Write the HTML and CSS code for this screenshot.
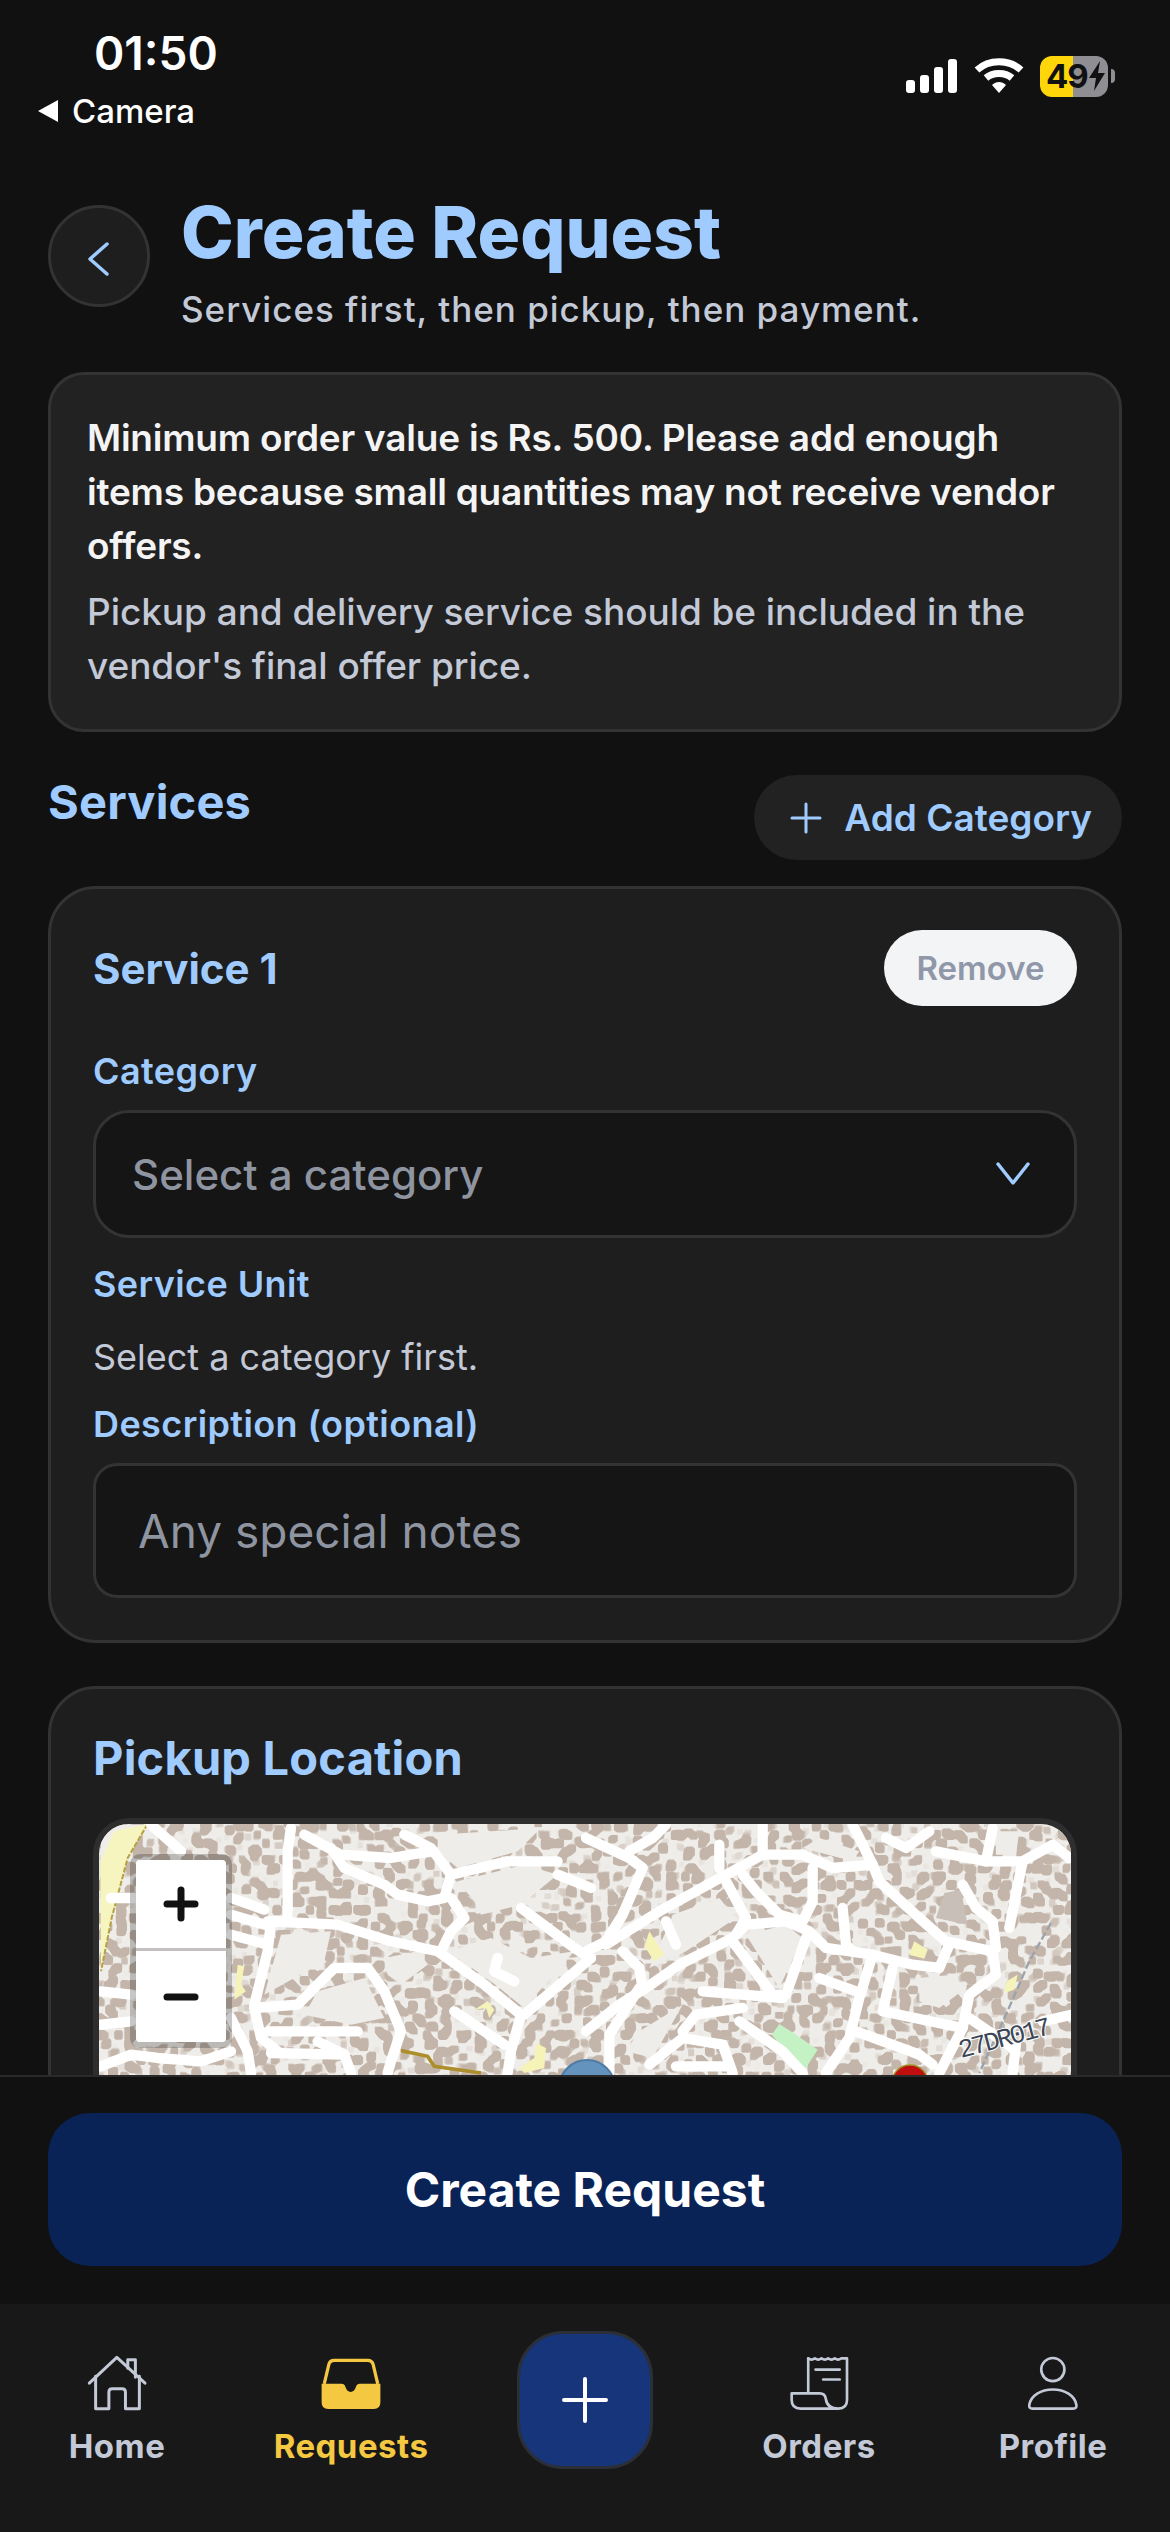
FILE: index.html
```html
<!DOCTYPE html>
<html lang="en">
<head>
  <meta charset="UTF-8">
  <meta name="viewport" content="width=device-width, initial-scale=1.0">
  <title>Create Request</title>
  <link rel="stylesheet" href="styles.css">
</head>
<body>
  <div class="screen">
    <div class="scroll-area">
      <div class="status-bar">
        <div>
          <div class="status-time">01:50</div>
          <div class="status-back"><span class="back-arrow"></span>Camera</div>
        </div>
        <div class="status-icons">
          <svg width="52" height="34" viewBox="0 0 52 34" fill="#fff">
            <rect x="0" y="21" width="9" height="13" rx="3"/>
            <rect x="14" y="16" width="9" height="18" rx="3"/>
            <rect x="28" y="8" width="9" height="26" rx="3"/>
            <rect x="42" y="0" width="9" height="34" rx="3"/>
          </svg>
          <svg width="50" height="36" viewBox="0 0 50 36" fill="none" stroke="#fff" stroke-width="7">
            <path d="M3 12 C15 1 35 1 47 12"/>
            <path d="M12 20 C19 14 31 14 38 20"/>
            <path d="M18 27 L25 35 L32 27 C28 23 22 23 18 27 Z" fill="#fff" stroke="none"/>
          </svg>
          <div class="battery">
            <span class="battery-level">49</span>
            <svg width="18" height="30" viewBox="0 0 18 30" fill="#111"><path d="M12 0 L1 17 H8 L6 30 L17 12 H10 Z"/></svg>
          </div>
          <span class="battery-cap"></span>
        </div>
      </div>

      <div class="content">
        <div class="page-header">
          <button class="back-btn">
            <svg width="24" height="36" viewBox="0 0 24 36" fill="none" stroke="#9fcbff" stroke-width="3.5" stroke-linecap="round" stroke-linejoin="round"><path d="M20 3 L3 18 L20 33"/></svg>
          </button>
          <div>
            <h1 class="page-title">Create Request</h1>
            <p class="page-sub">Services first, then pickup, then payment.</p>
          </div>
        </div>

        <div class="notice">
          <p class="notice-main">Minimum order value is Rs. 500. Please add enough items because small quantities may not receive vendor offers.</p>
          <p class="notice-sub">Pickup and delivery service should be included in the vendor's final offer price.</p>
        </div>

        <div class="section-row">
          <h2 class="section-title">Services</h2>
          <button class="add-btn">
            <svg width="32" height="32" viewBox="0 0 32 32" stroke="#9fcbff" stroke-width="3" stroke-linecap="round"><path d="M16 2 V30 M2 16 H30"/></svg>
            Add Category
          </button>
        </div>

        <div class="card service-card">
          <div class="service-head">
            <h3 class="service-title">Service 1</h3>
            <button class="remove-btn">Remove</button>
          </div>
          <div class="field-label label-category">Category</div>
          <div class="select-box">
            <span>Select a category</span>
            <svg width="34" height="26" viewBox="0 0 34 26" fill="none" stroke="#9fcbff" stroke-width="3.5" stroke-linecap="round" stroke-linejoin="round"><path d="M2 3 L17 22 L32 3"/></svg>
          </div>
          <div class="field-label label-unit">Service Unit</div>
          <div class="hint">Select a category first.</div>
          <div class="field-label label-desc">Description (optional)</div>
          <div class="text-box">Any special notes</div>
        </div>

        <div class="card pickup-card">
          <h2 class="section-title">Pickup Location</h2>
          <div class="map">
            <svg class="map-canvas" width="974" height="400" viewBox="98 1826 974 400">
              <defs>
                <filter id="buildings" x="0" y="0" width="100%" height="100%" color-interpolation-filters="sRGB">
                  <feTurbulence type="fractalNoise" baseFrequency="0.12" numOctaves="1" seed="11"/>
                  <feColorMatrix values="0 0 0 0 0.765  0 0 0 0 0.71  0 0 0 0 0.665  16 0 0 0 -8.9"/>
                  <feMorphology operator="dilate" radius="1.5"/>
                  <feGaussianBlur stdDeviation="0.5"/>
                </filter>
                <filter id="soft"><feGaussianBlur stdDeviation="0.6"/></filter>
              </defs>
              <rect x="98" y="1826" width="974" height="400" fill="#efede9"/>
              <rect x="98" y="1826" width="974" height="400" filter="url(#buildings)"/>

              <g transform="translate(90 1820) scale(.3333)">
                <g fill="#efede9" filter="url(#soft)">
                  <path d="M1040 50 L1350 30 L1280 100 L1100 150 L1040 100 Z"/>
                  <path d="M1100 190 L1300 140 L1400 170 L1290 260 L1170 290 L1150 250 Z"/>
                  <path d="M1070 400 L1200 360 L1320 420 L1450 400 L1300 570 L1200 490 Z"/>
                  <path d="M570 350 L720 340 L700 430 L520 530 Z"/>
                  <path d="M680 520 L820 480 L880 600 L780 620 L640 590 Z"/>
                  <path d="M880 420 L980 400 L1010 440 L930 500 L890 470 Z"/>
                  <path d="M30 20 H170 L30 200 Z"/>
                </g>
                <path d="M28 130 L70 40 L170 18 L110 120 L62 300 L30 460 Z" fill="#f7f5bf"/>
                <path d="M170 18 L110 120 L62 300 L30 460" fill="none" stroke="#b8a040" stroke-width="6" stroke-dasharray="16 5"/>
                <g fill="#f5f3b8">
                  <path d="M440 440 L460 445 L450 500 L465 520 L430 545 Z"/>
                  <path d="M1150 575 L1190 550 L1210 575 L1195 600 L1185 570 Z"/>
                  <path d="M1335 675 L1365 690 L1360 750 L1300 765 L1285 750 L1330 720 Z"/>
                </g>
                <g fill="none" stroke="#fff" stroke-width="31" stroke-linecap="round" stroke-linejoin="round" filter="url(#soft)">
                  <path d="M180 20 L270 100"/>
                  <path d="M60 240 H130"/>
                  <path d="M420 240 L520 275"/>
                  <path d="M420 290 L520 320"/>
                  <path d="M420 350 L530 380"/>
                  <path d="M600 30 L590 100 L590 310 L540 310 L530 400 L490 560"/>
                  <path d="M530 310 L740 320 L900 370 L1040 400 L1180 500 L1290 590 L1260 700 L1250 765"/>
                  <path d="M490 570 L620 560 L730 450 L830 450 L880 520 L930 640 L900 730 L890 765"/>
                  <path d="M490 570 L510 660 L560 700"/>
                  <path d="M720 90 L760 150 L880 200 L920 230 L1010 250 L1060 240 L1080 170 L1020 90 L940 50"/>
                  <path d="M640 50 L750 110 L900 120 L1020 100"/>
                  <path d="M1080 170 L1250 130 L1400 130"/>
                  <path d="M1080 240 L1120 300 L1080 340 L1050 400"/>
                  <path d="M1290 270 L1450 390 L1500 420"/>
                  <path d="M1400 170 L1500 210"/>
                  <path d="M1090 580 L1240 680"/>
                  <path d="M1220 420 L1210 460 L1270 490"/>
                  <path d="M1300 590 L1500 420"/>
                  <path d="M30 520 L120 530"/>
                  <path d="M30 620 L120 610"/>
                  <path d="M30 745 L120 710 L200 720 L330 730 L420 700"/>
                  <path d="M420 600 L470 700 L480 765"/>
                  <path d="M530 640 L800 640"/>
                  <path d="M680 670 L760 710 L780 765"/>
                  <path d="M540 705 L760 710"/>
                </g>
                <path d="M930 698 L1010 715 L1030 745 L1170 765" fill="none" stroke="#ad8e2d" stroke-width="11"/>
              </g>

              <g transform="translate(585 1820) scale(.3333)">
                <g fill="#efede9" filter="url(#soft)">
                  <path d="M260 290 L400 240 L450 300 L300 400 L190 450 L240 340 Z"/>
                  <path d="M480 350 L600 320 L650 360 L580 510 Z"/>
                  <path d="M1230 40 H1300 L1290 110 L1230 110 Z"/>
                  <path d="M1000 480 L1100 470 L1140 510 L1060 570 L1000 550 Z"/>
                  <path d="M160 640 L290 560 L200 720 L120 700 Z"/>
                  <path d="M700 60 L820 100 L800 130 L650 90 Z"/>
                </g>
                <path d="M558 650 L580 618 L630 650 L695 695 L650 765 Z" fill="#c5f2c5"/>
                <g fill="#f5f3b8">
                  <path d="M190 340 L235 410 L205 430 L175 385 Z"/>
                  <path d="M985 370 L1025 395 L1015 422 L970 410 Z"/>
                  <path d="M1295 470 L1285 515 L1255 525 L1262 490 Z"/>
                </g>
                <path d="M1075 225 L1125 215 L1145 320 L1050 300 Z" fill="#c8bfb8"/>
                <g fill="none" stroke="#fff" stroke-width="31" stroke-linecap="round" stroke-linejoin="round" filter="url(#soft)">
                  <path d="M60 380 L220 280 L420 170 L530 110 L650 110 L740 150 L860 140 L880 190 L1000 300 L1080 370 L1220 400 L1230 470 L1150 530 L1130 630 L1060 765"/>
                  <path d="M0 60 L130 120 L170 150 L110 290 L60 370 L0 400"/>
                  <path d="M130 100 L200 60 L240 20"/>
                  <path d="M530 20 V110"/>
                  <path d="M800 20 L860 140"/>
                  <path d="M400 80 V150"/>
                  <path d="M900 60 L960 90 L1030 40"/>
                  <path d="M1050 100 L1200 130 L1310 130 L1400 80 L1450 120"/>
                  <path d="M1310 130 L1270 330"/>
                  <path d="M1220 30 L1200 130"/>
                  <path d="M1130 200 L1170 270 L1220 310 L1230 390"/>
                  <path d="M0 640 L100 560 L180 510 L280 440 L440 360 L480 320 L600 310 L670 340 L720 390 L860 410 L820 540 L790 660 L720 765"/>
                  <path d="M440 370 L560 530 L600 530 L660 360"/>
                  <path d="M350 520 L590 540"/>
                  <path d="M70 765 L70 650 L160 510"/>
                  <path d="M860 410 L980 440 L1060 450 L1090 380"/>
                  <path d="M920 450 L890 580 L1130 630"/>
                  <path d="M420 190 L480 300 L450 350"/>
                  <path d="M470 170 L510 220 L580 290 L650 310 L680 250 L680 150"/>
                  <path d="M240 310 L270 380"/>
                  <path d="M770 270 L780 380 L800 400"/>
                  <path d="M700 480 L810 520"/>
                  <path d="M290 640 L330 590 L470 570"/>
                  <path d="M190 740 L290 660 L410 680 L440 765"/>
                  <path d="M460 610 L590 700 L650 765"/>
                  <path d="M810 640 L1000 710 L1040 740"/>
                  <path d="M270 745 H420"/>
                  <path d="M1290 680 L1280 765"/>
                  <path d="M1150 600 L1280 690"/>
                  <path d="M110 400 L160 450 L170 510"/>
                  <path d="M1370 610 L1460 590"/>
                </g>
                <path d="M1395 315 L1330 430 L1260 590 L1180 765" fill="none" stroke="#9aa3ad" stroke-width="7" stroke-dasharray="24 9"/>
              </g>

              <text class="road-label" x="960" y="2060" transform="rotate(-15 960 2060)">27DR017</text>
              <circle cx="586" cy="2090" r="28" fill="#6493bd" stroke="#4e7ca6" stroke-width="2"/>
              <circle cx="909" cy="2085" r="18" fill="#c00d0d" stroke="#a08a20" stroke-width="1.5"/>
            </svg>
            <div class="zoom-control">
              <button class="zoom-btn">
                <svg width="36" height="36" viewBox="0 0 36 36" stroke="#111" stroke-width="7" stroke-linecap="round"><path d="M18 4 V32 M4 18 H32"/></svg>
              </button>
              <button class="zoom-btn">
                <svg width="36" height="36" viewBox="0 0 36 36" stroke="#111" stroke-width="7" stroke-linecap="round"><path d="M4 18 H32"/></svg>
              </button>
            </div>
          </div>
        </div>
      </div>
    </div>

    <div class="footer-bar">
      <button class="submit-btn">Create Request</button>
    </div>

    <nav class="bottom-nav">
      <div class="nav-item">
        <svg class="nav-icon" viewBox="80 75 185 175" fill="none" stroke="#c3c9d6" stroke-width="9" stroke-linecap="round" stroke-linejoin="round">
          <path d="M89 163 L172 85 L257 163"/>
          <path d="M205 118 V92 H228 V145"/>
          <path d="M108 142 V240 H148 V190 Q148 180 158 180 H188 Q198 180 198 190 V240 H240 V142"/>
        </svg>
        <span>Home</span>
      </div>
      <div class="nav-item active">
        <svg class="nav-icon" viewBox="780 75 190 175" fill="#f5c842">
          <path d="M793 165 L807 106 Q810 93 824 93 H926 Q940 93 943 106 L957 165" fill="none" stroke="#f5c842" stroke-width="10"/>
          <path d="M785 165 H846 Q855 165 858 175 Q863 190 874 190 Q885 190 890 175 Q893 165 902 165 H965 V222 Q965 242 945 242 H805 Q785 242 785 222 Z"/>
        </svg>
        <span>Requests</span>
      </div>
      <div class="nav-item">
        <button class="fab">
          <svg width="46" height="46" viewBox="0 0 46 46" stroke="#fff" stroke-width="4" stroke-linecap="round"><path d="M23 2 V44 M2 23 H44"/></svg>
        </button>
      </div>
      <div class="nav-item">
        <svg class="nav-icon" viewBox="445 75 185 175" fill="none" stroke="#c3c9d6" stroke-width="8" stroke-linecap="round" stroke-linejoin="round">
          <path d="M505 88 q10 8 20 0 q10 8 20 0 q10 8 20 0 q10 8 20 0 q10 8 20 0 l15 0"/>
          <path d="M505 88 V192"/>
          <path d="M622 88 V214 Q622 240 596 240 H482 Q455 240 455 214 V194 H540 Q555 194 558 210 Q562 240 596 240"/>
          <path d="M527 122 H600 M550 152 H600"/>
        </svg>
        <span>Orders</span>
      </div>
      <div class="nav-item">
        <svg class="nav-icon" viewBox="1149 75 185 175" fill="none" stroke="#c3c9d6" stroke-width="8" stroke-linejoin="round">
          <circle cx="1241" cy="122" r="35"/>
          <path d="M1170 228 C1175 200 1205 182 1241 182 C1277 182 1307 200 1312 228 Q1314 240 1302 240 H1180 Q1168 240 1170 228 Z"/>
        </svg>
        <span>Profile</span>
      </div>
    </nav>
  </div>
</body>
</html>
```

FILE: styles.css
```css
* {
  box-sizing: border-box;
}

body {
  margin: 0;
  background-color: #111;
  font-family: Inter, "Liberation Sans", sans-serif;
}

button {
  font-family: inherit;
  border: none;
  padding: 0;
}

h1, h2, h3, p {
  margin: 0;
}

.screen {
  width: 1170px;
  height: 2532px;
  display: flex;
  flex-direction: column;
  overflow: hidden;
}

.scroll-area {
  flex: 1;
  min-height: 0;
  overflow: hidden;
}

/* status bar */
.status-bar {
  height: 190px;
  padding: 22px 55px 0 38px;
  display: flex;
  justify-content: space-between;
  color: #fff;
}

.status-time {
  font-size: 46px;
  font-weight: 600;
  line-height: 62px;
  padding-left: 56px;
}

.status-back {
  display: flex;
  align-items: center;
  gap: 14px;
  font-size: 33px;
  font-weight: 500;
  line-height: 54px;
}

.back-arrow {
  width: 0;
  height: 0;
  border-top: 11px solid transparent;
  border-bottom: 11px solid transparent;
  border-right: 20px solid #fff;
}

.status-icons {
  display: flex;
  align-items: center;
  gap: 16px;
  height: 40px;
  margin-top: 34px;
}

.battery {
  width: 68px;
  height: 41px;
  border-radius: 12px;
  background: linear-gradient(90deg, #ffd60a 48%, #8e8e93 48%);
  display: flex;
  align-items: center;
  padding-left: 6px;
}

.battery-level {
  color: #111;
  font-size: 33px;
  font-weight: 700;
  letter-spacing: -1px;
}

.battery-cap {
  width: 4px;
  height: 14px;
  background-color: #8e8e93;
  border-radius: 0 4px 4px 0;
  margin-left: -13px;
}

/* page content */
.content {
  padding: 0 48px;
}

.page-header {
  display: flex;
  align-items: flex-start;
  gap: 31px;
}

.back-btn {
  width: 102px;
  height: 102px;
  margin-top: 15px;
  padding-top: 6px;
  flex-shrink: 0;
  border-radius: 50%;
  background-color: #1e1e1e;
  border: 3px solid #333;
  display: flex;
  align-items: center;
  justify-content: center;
}

.page-title {
  font-size: 71px;
  font-weight: 800;
  line-height: 84px;
  color: #9fcbff;
}

.page-sub {
  margin-top: 10px;
  font-size: 35px;
  font-weight: 500;
  line-height: 50px;
  letter-spacing: 1px;
  color: #c3c9d6;
}

.notice {
  margin-top: 38px;
  padding: 36px 36px;
  border: 3px solid #333;
  border-radius: 36px;
  background-color: #222;
}

.notice-main {
  font-size: 37px;
  font-weight: 600;
  line-height: 54px;
  letter-spacing: -0.22px;
  color: #f4f4f5;
}

.notice-sub {
  margin-top: 12px;
  font-size: 37px;
  font-weight: 500;
  line-height: 54px;
  letter-spacing: -0.06px;
  color: #c3c9d6;
}

.section-row {
  margin-top: 43px;
  display: flex;
  justify-content: space-between;
  align-items: flex-start;
}

.section-title {
  font-size: 47px;
  font-weight: 700;
  line-height: 54px;
  letter-spacing: 0.2px;
  color: #9fcbff;
}

.add-btn {
  height: 85px;
  padding: 0 30px 0 36px;
  border-radius: 43px;
  background-color: #222;
  color: #9fcbff;
  font-size: 37px;
  font-weight: 600;
  display: flex;
  align-items: center;
  gap: 22px;
}

.card {
  border: 3px solid #333;
  border-radius: 48px;
  background-color: #1e1e1e;
  padding: 41px 42px 42px;
}

.service-card {
  margin-top: 26px;
}

.service-head {
  display: flex;
  justify-content: space-between;
  align-items: center;
}

.service-title {
  font-size: 42px;
  font-weight: 700;
  color: #9fcbff;
}

.remove-btn {
  width: 193px;
  height: 76px;
  border-radius: 38px;
  background-color: #f3f4f6;
  color: #8f97a8;
  font-size: 33px;
  font-weight: 600;
}

.field-label {
  font-size: 36px;
  font-weight: 600;
  line-height: 44px;
  letter-spacing: 0.4px;
  color: #9fcbff;
}

.label-category {
  margin-top: 43px;
}

.label-unit {
  margin-top: 24px;
}

.label-desc {
  margin-top: 23px;
}

.select-box {
  margin-top: 17px;
  height: 128px;
  padding: 0 44px 0 36px;
  border: 3px solid #333;
  border-radius: 36px;
  background-color: #151515;
  color: #8e94a0;
  font-size: 42px;
  font-weight: 500;
  display: flex;
  align-items: center;
  justify-content: space-between;
}

.hint {
  margin-top: 29px;
  font-size: 36px;
  line-height: 44px;
  color: #c3c9d6;
}

.text-box {
  margin-top: 17px;
  height: 135px;
  padding: 0 42px;
  border: 3px solid #333;
  border-radius: 24px;
  background-color: #151515;
  color: #8e94a0;
  font-size: 46px;
  display: flex;
  align-items: center;
}

.pickup-card {
  margin-top: 43px;
}

.pickup-card .section-title {
  line-height: 56px;
}

.map {
  position: relative;
  margin-top: 32px;
  height: 412px;
  border: 6px solid #2e2e2e;
  border-radius: 36px;
  overflow: hidden;
}

.map-canvas {
  display: block;
}

.road-label {
  font-family: "Liberation Mono", monospace;
  font-size: 26px;
  letter-spacing: -2.4px;
  fill: #3b4656;
  stroke: #fff;
  stroke-width: 2px;
  paint-order: stroke;
}

.zoom-control {
  position: absolute;
  top: 30px;
  left: 31px;
  width: 102px;
  border: 6px solid rgba(0, 0, 0, 0.22);
  border-radius: 10px;
  overflow: hidden;
  background-clip: padding-box;
}

.zoom-btn {
  display: flex;
  align-items: center;
  justify-content: center;
  width: 90px;
  height: 91px;
  background-color: #fff;
}

.zoom-btn:first-child {
  border-bottom: 3px solid #c4c0c0;
}

/* bottom */
.footer-bar {
  height: 229px;
  padding: 36px 48px 0;
  border-top: 2px solid #2a2a2a;
  background-color: #111;
}

.submit-btn {
  width: 100%;
  height: 153px;
  border-radius: 42px;
  background-color: #0a2357;
  color: #fff;
  font-size: 48px;
  font-weight: 700;
}

.bottom-nav {
  height: 228px;
  background-color: #181818;
  display: grid;
  grid-template-columns: repeat(5, 234px);
}

.nav-item {
  padding-top: 50px;
  display: flex;
  flex-direction: column;
  align-items: center;
  color: #c3c9d6;
  font-size: 33px;
  font-weight: 700;
  line-height: 44px;
  letter-spacing: 0.5px;
}

.nav-item.active {
  color: #f5c842;
}

.nav-icon {
  width: 62px;
  height: 58px;
  margin-bottom: 12px;
}

.fab {
  width: 136px;
  height: 138px;
  margin-top: -23px;
  border-radius: 46px;
  background-color: #16357a;
  border: 3px solid #2b2f38;
  display: flex;
  align-items: center;
  justify-content: center;
}
```
